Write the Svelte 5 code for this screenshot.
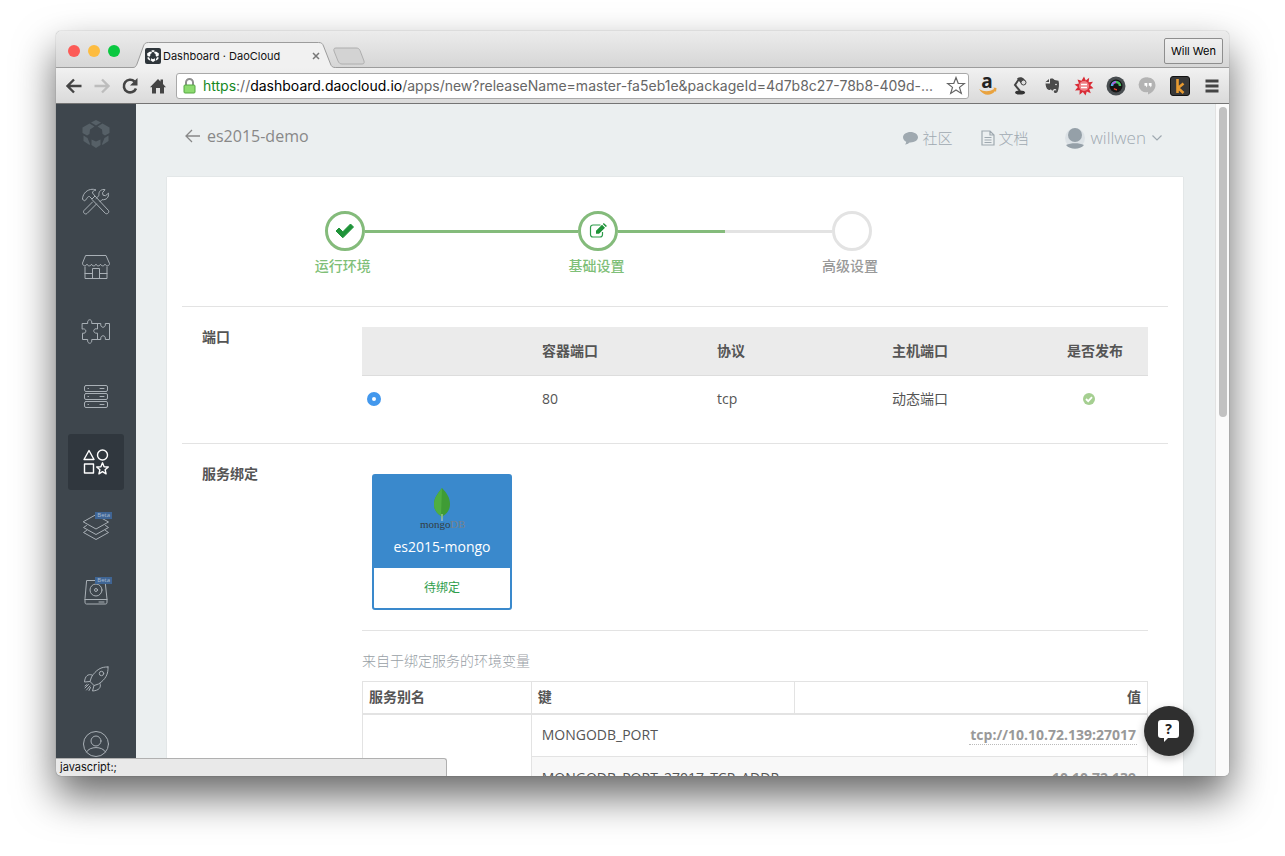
<script>
	const steps = [
		{ title: '运行环境', state: 'done', icon: 'check' },
		{ title: '基础设置', state: 'current', icon: 'edit' },
		{ title: '高级设置', state: 'todo', icon: null }
	];

	const menu = [
		{ id: 'tools', label: '构建' },
		{ id: 'store', label: '镜像仓库' },
		{ id: 'puzzle', label: '服务集成' },
		{ id: 'servers', label: '主机' },
		{ id: 'apps', label: '应用' },
		{ id: 'layers', label: '编排', beta: true },
		{ id: 'disk', label: '存储', beta: true },
		{ id: 'rocket', label: '新手引导', spaced: true },
		{ id: 'user', label: '用户中心' }
	];

	const ports = [{ container: 80, protocol: 'tcp', host: '动态端口' }];

	const envVars = [
		{ key: 'MONGODB_PORT', value: 'tcp://10.10.72.139:27017' },
		{ key: 'MONGODB_PORT_27017_TCP_ADDR', value: '10.10.72.139' }
	];

	const extensions = ['amazon', 'lamp', 'evernote', 'burst', 'lens', 'hangouts', 'kindle'];

	let active = $state('apps');
	let port = $state(80);
</script>

{#snippet cube(size)}
	<svg width={size} height={size} viewBox="0 0 28 28" fill="currentColor" aria-hidden="true">
		<path d="M14 0l5 2.500-5 3-5-3z" />
		<path d="M7.500 3.500l5 3L8 9.500 7.500 14l-2.500 1.500-4.500-2.500V7.500z" />
		<path d="M20.500 3.500l-5 3L20 9.500l.5 4.500 2.500 1.500 4.500-2.500V7.500z" />
		<path d="M1.500 15.500l4 2.500 2.500 6-.5 1L1.500 21z" />
		<path d="M26.500 15.500l-4 2.500-2.500 6 .5 1 6-4z" />
		<path d="M9.500 19.500l4.500 2 4.500-2v5.500L14 28l-4.500-3z" />
	</svg>
{/snippet}

{#snippet menuIcon(id)}
	<svg width="30" height="30" viewBox="0 0 30 30" fill="none" stroke="currentColor" stroke-linejoin="round" stroke-linecap="round" aria-hidden="true">
		{#if id === 'tools'}
			<path d="M1.500 12c0-4 3-8.500 8-9.500 2-.4 4-.2 5.500.5-2.500.5-3.500 1.500-3.500 3l2.500 3-3 3-2.500-2.500c-1.500 0-2 .6-2.500 2L4 13.500z" />
			<path d="M14 9l13.500 14.500c1 2-1 4-3 3L11 12.500" />
			<path d="M11.500 15L3 23.500c-1.500 2 1 4.500 3 3l9.500-9.500M15 11.500l3-3c-.6-3 1-6 5-6l1 .2-2.500 3 .5 2.500 2.500.5 3-2.500c.5 4-2 7-6.500 6.500l-2 2" />
		{:else if id === 'store'}
			<path d="M5 3.500h20l3.500 8c0 3-4 3-4.500.5-.5 2.500-4 2.500-4.500 0-.5 2.500-4 2.500-4.500 0-.5 2.500-4 2.500-4.500 0-.5 2.500-4 2.500-4.500 0-.5 2.500-4.500 2.500-4.500-.5z" />
			<path d="M4 15v11.500h22V15M11.500 26.500v-10h7v10M4 21.500h7.500M18.500 21.500H26" />
		{:else if id === 'puzzle'}
			<path d="M1.500 6.500h5.200c-1-5 5-5 4 0h5.800v5.500c-5-1.500-5 5 0 4.200v6.300h-5.800c1 5-5 5-4 0H1.500v-6.300c4.500 1 4.500-5.500 0-4.200z" />
			<path d="M16.500 6.500h3.300c-1 5 5.500 5 4.500 0h4.200v16h-4.200c1-5-5.500-5-4.500 0h-3.300" />
		{:else if id === 'servers'}
			<rect x="3.500" y="3.500" width="23" height="6" rx="1.500" />
			<rect x="3.500" y="11.500" width="23" height="6" rx="1.500" />
			<rect x="3.500" y="19.500" width="23" height="6" rx="1.500" />
			<path d="M7 6.500h.5M7 14.500h.5M7 22.500h.5M19 6.500h4M19 14.500h4M19 22.500h4" />
		{:else if id === 'apps'}
			<g stroke-width="1.400">
				<path d="M8 3.500l5 9H3z" />
				<circle cx="21.500" cy="8" r="5" />
				<rect x="3.500" y="17" width="9" height="9" />
				<path d="M21.500 15.800l1.600 3.900 4.200.3-3.200 2.700 1 4.100-3.600-2.200-3.600 2.200 1-4.100-3.200-2.700 4.200-.3z" />
			</g>
		{:else if id === 'layers'}
			<path d="M15 3l12.500 7L15 17 2.500 10z" />
			<path d="M5.500 13.500L2.500 15.500 15 22.500l12.500-7-3-2M5.500 18.500l-3 2L15 27.500l12.500-7-3-2" />
		{:else if id === 'disk'}
			<path d="M6 3.500h18l2 18.500v3c0 1.500-.5 2-1.500 2h-19C4.500 27 4 26.500 4 25v-3z" />
			<path d="M4 22.500h22M18 25h5" />
			<circle cx="15" cy="13" r="6" />
			<circle cx="15" cy="13" r="1.500" />
		{:else if id === 'rocket'}
			<path d="M27 3c-7-.5-12 3-16.500 10L9 17.500l4 4 4.500-1.500C24.500 15.500 27.500 10 27 3z" />
			<path d="M11 11c-4-1.500-7 1-7.500 7l5.500-.5M19 19.500c1.500 4-1 7-7.500 7.500l1.500-5.500" />
			<circle cx="20.500" cy="9.500" r="2.200" />
			<path d="M7.500 20.500L4 24M9 22l-3.500 4M6 20.500l-2 1.500M9.500 23.500l-1.500 3" />
		{:else if id === 'user'}
			<circle cx="15" cy="15" r="12.500" />
			<circle cx="15" cy="12" r="5" />
			<path d="M5.500 23c3-6 16-6 19 0" />
		{/if}
	</svg>
{/snippet}

{#snippet extIcon(id)}
	<svg width="20" height="20" viewBox="0 0 20 20" fill="none" aria-hidden="true">
		{#if id === 'amazon'}
			<text class="glyph" x="9" y="12" font-size="19" text-anchor="middle" fill="#222">a</text>
			<path d="M1 13c5 3 10 3 15 0l-.5-1.500 3 .5-.5 4-1-1C13 20.500 5 20 1 13z" fill="#e9a33f" />
		{:else if id === 'lamp'}
			<path d="M9 3l-4 6 5 6" stroke="#444" stroke-width="2" />
			<path d="M7 2.500c4-3 9 0 8.500 5.500l-4.500-.5z" fill="#444" />
			<circle cx="13.500" cy="6.500" r="2.500" fill="#ddd" stroke="#444" />
			<ellipse cx="10" cy="16.500" rx="5" ry="2" fill="#333" />
		{:else if id === 'evernote'}
			<path d="M4 6h3V3L3 6.500zM8 3c2-1 4 0 4.500 1l4 .8c1 3 .5 8-1 11.200-1.500 2-4.500 1-3.500-1.500l2.500-.3c-.5-1.700-3-1.500-3.500.3-1 0-2-.5-2-1.500l-1 1c-2.500 0-4-1.500-4.500-6.500h4.500z" fill="#4b4b4b" />
			<circle cx="14" cy="8.500" r=".8" fill="#eee" />
		{:else if id === 'burst'}
			<path d="M10 .5l1.800 4 3.400-2.700-.6 4.400 4.400-.4-2.700 3.500 3.200 3-4.300.7 1.600 4.200-4-1.600-1.300 4-2.600-3.600-3.400 2.700.2-4.400-4.700.3 2.900-3.500L.5 8.500l4.500-.9-1.500-4 4 1.200z" fill="#d92b35" />
			<circle cx="10" cy="10" r="5" fill="#ef7f85" />
			<path d="M7 8.500h6M7 11.500h6" stroke="#fff" stroke-width="1.500" />
		{:else if id === 'lens'}
			<circle cx="10" cy="10" r="9.500" fill="#484d50" />
			<circle cx="10" cy="10" r="6.500" fill="#151515" />
			<path d="M10 6a4 4 0 0 0-4 4" stroke="#45b8e7" stroke-width="2.500" />
			<path d="M6.500 8.500A4 4 0 0 1 10 6" stroke="#c54bd5" stroke-width="1.500" />
			<path d="M10 6a4 4 0 0 1 4 4" stroke="#48bf61" stroke-width="2.500" />
			<path d="M8 12.500a4 4 0 0 0 3 1.200" stroke="#e8452f" stroke-width="1.500" />
		{:else if id === 'hangouts'}
			<path d="M10 1.500a7.500 7.500 0 0 1 7.500 7.500c0 4.500-3.500 8-7.500 9.500v-2.500A7.500 7.500 0 0 1 10 1.500z" fill="#b3b3b3" />
			<path d="M10 1.500a7.500 7.500 0 1 0 0 14.500z" fill="#b3b3b3" />
			<path d="M6.500 7h2.800v3L8 11.500V9.700H6.500zM10.800 7h2.800v3l-1.300 1.500V9.700h-1.500z" fill="#fff" />
		{:else}
			<rect x=".5" y=".5" width="19" height="19" rx="2.500" fill="#383838" stroke="#111" />
			<path d="M7.500 3v14M13.500 7.500L8 12l5.500 5" stroke="#e79a31" stroke-width="2.600" />
		{/if}
	</svg>
{/snippet}

<div class="desktop">
	<div class="window">
		<header class="titlebar">
			<div class="lights">
				<button class="light close" aria-label="Close"></button>
				<button class="light minimize" aria-label="Minimize"></button>
				<button class="light zoom" aria-label="Zoom"></button>
			</div>
			<div class="tab">
				<svg class="tab-shape" viewBox="0 0 204 26" aria-hidden="true">
					<path d="M0 25.500c2 0 3-1 4-3.500L10.500 4c1-2.500 2-3.500 5-3.500h170c3 0 4 1 5 3.500l7 18c1 2.500 2 3.500 5 3.500V26H0z" fill="#f1f1f1" />
					<path d="M0 25.500c2 0 3-1 4-3.500L10.500 4c1-2.500 2-3.500 5-3.500h170c3 0 4 1 5 3.500l7 18c1 2.500 2 3.500 5 3.500" fill="none" stroke="#9c9c9c" />
				</svg>
				<span class="favicon">{@render cube(12)}</span>
				<span class="tab-title">Dashboard · DaoCloud</span>
				<button class="tab-close" aria-label="Close tab">
					<svg width="8" height="8" viewBox="0 0 8 8" stroke="#777" stroke-width="1.500"><path d="M1 1l6 6M7 1L1 7" /></svg>
				</button>
			</div>
			<button class="new-tab" aria-label="New tab">
				<svg width="32" height="18" viewBox="0 0 32 18"><path d="M3 1h20c2 0 3 .5 4 2.500l4 10.500c.5 2 0 3-2 3H9c-2 0-3-1-4-3L1 4C.5 2 1 1 3 1z" fill="#d3d3d3" stroke="#aeaeae" /></svg>
			</button>
			<button class="profile">Will Wen</button>
		</header>

		<div class="toolbar">
			<button class="tool" aria-label="Back">
				<svg width="18" height="18" viewBox="0 0 18 18" fill="none" stroke="#444" stroke-width="2.400"><path d="M16.500 9H3M9 2.500L2.500 9 9 15.500" /></svg>
			</button>
			<button class="tool" aria-label="Forward" disabled>
				<svg width="18" height="18" viewBox="0 0 18 18" fill="none" stroke="#bdbdbd" stroke-width="2.400"><path d="M1.500 9H15M9 2.500L15.500 9 9 15.500" /></svg>
			</button>
			<button class="tool" aria-label="Reload">
				<svg width="18" height="18" viewBox="0 0 18 18"><path d="M15 11.500A6.300 6.300 0 1 1 13.500 4.500" fill="none" stroke="#444" stroke-width="2.600" /><path d="M16.500 1v7.500H9z" fill="#444" /></svg>
			</button>
			<button class="tool" aria-label="Home">
				<svg width="16" height="18" viewBox="0 0 16 18" fill="#444"><path d="M8 2l2.500 2.500V2.500H13V7l3 3.200h-2V16.500h-4V11H6v5.500H2V10.200H0z" /></svg>
			</button>
			<div class="omnibox">
				<svg width="13" height="16" viewBox="0 0 13 16" aria-hidden="true">
					<path d="M3 7.500V4.500a3.500 3.500 0 0 1 7 0v3" fill="none" stroke="#8f8f8f" stroke-width="2" />
					<rect x="1" y="7" width="11" height="8" rx="1" fill="#8ddb70" stroke="#54a842" />
				</svg>
				<div class="url" role="textbox" tabindex="0" contenteditable="true" aria-label="Address"><span class="secure">https</span>://<span class="host">dashboard.daocloud.io</span>/apps/new?releaseName=master-fa5eb1e&amp;packageId=4d7b8c27-78b8-409d-...</div>
				<button class="star" aria-label="Bookmark">
					<svg width="20" height="20" viewBox="0 0 20 20" fill="#fff" stroke="#666" stroke-width="1.200"><path d="M10 1.500l2.200 5.800 6.200.2-4.900 3.900 1.800 6-5.300-3.500-5.300 3.500 1.800-6L1.600 7.500l6.200-.2z" /></svg>
				</button>
			</div>
			<div class="extensions">
				{#each extensions as id}
					<button class="ext" aria-label={id}>{@render extIcon(id)}</button>
				{/each}
				<button class="ext" aria-label="Menu">
					<svg width="14" height="14" viewBox="0 0 14 14" stroke="#444" stroke-width="3"><path d="M.5 2h13M.5 7h13M.5 12h13" /></svg>
				</button>
			</div>
		</div>

		<div class="viewport">
			<nav class="sidebar">
				<a class="logo" href="#home" aria-label="DaoCloud">{@render cube(28)}</a>
				{#each menu as item}
					<a
						class="item"
						class:active={active === item.id}
						class:spaced={item.spaced}
						href="#{item.id}"
						aria-label={item.label}
						onclick={() => (active = item.id)}
					>
						{@render menuIcon(item.id)}
						{#if item.beta}<span class="beta">Beta</span>{/if}
					</a>
				{/each}
			</nav>

			<main class="content">
				<div class="topbar">
					<a class="back" href="#apps">
						<svg width="15" height="14" viewBox="0 0 15 14" fill="none" stroke="currentColor" stroke-width="1.300"><path d="M15 7H1M7 1L1 7l6 6" /></svg>
						es2015-demo
					</a>
					<div class="links">
						<a href="#community">
							<svg width="15" height="14" viewBox="0 0 15 14" fill="currentColor"><path d="M7.500 1C11.600 1 15 3.300 15 6.200s-3.400 5.200-7.500 5.200h-.9C5.400 12.600 3.800 13.300 2 13.500c.8-.8 1.200-1.700 1.200-2.800C1.200 9.700 0 8 0 6.200 0 3.300 3.400 1 7.500 1z" /></svg>
							社区
						</a>
						<a href="#docs">
							<svg width="14" height="16" viewBox="0 0 14 16" fill="none" stroke="currentColor" stroke-width="1.200"><path d="M1 1h8l4 4v10H1zM9 1v4h4M3.500 7.500h7M3.500 10h7M3.500 12.500h7" /></svg>
							文档
						</a>
						<a class="account" href="#account">
							<svg width="20" height="22" viewBox="0 0 20 22"><circle cx="10" cy="11" r="10" fill="#dce2e6" /><circle cx="10" cy="8" r="7" fill="#95a0a8" /><path d="M1 18c5-2.500 13-2.500 18 0-4 5-14 5-18 0z" fill="#95a0a8" /></svg>
							willwen
							<svg width="10" height="6" viewBox="0 0 10 6" fill="none" stroke="currentColor" stroke-width="1.200"><path d="M.5.5L5 5 9.500.5" /></svg>
						</a>
					</div>
				</div>

				<div class="card">
					<ol class="steps">
						{#each steps as step}
							<li class="step {step.state}">
								<div class="track">
									<span class="line before"></span>
									<span class="circle">
										{#if step.icon === 'check'}
											<svg width="20" height="16" viewBox="0 0 20 16" fill="#1f9339"><path d="M1 8l3-3 3.800 3.800L15.500 1l3 3L7.800 14.800z" stroke="#1f9339" stroke-linejoin="round" /></svg>
										{:else if step.icon === 'edit'}
											<svg width="18" height="16" viewBox="0 0 18 16"><path d="M11.500 2H4a2.500 2.500 0 0 0-2.500 2.500v7A2.500 2.500 0 0 0 4 14h7a2.500 2.500 0 0 0 2.500-2.500V9" fill="none" stroke="#2c9b49" stroke-width="1.200" /><path d="M7 7.800L13 1.800l3 3-6 6H7zM13.800 1l1-1L18 3l-1.200 1z" fill="#1f9339" /></svg>
										{/if}
									</span>
									<span class="line after"></span>
								</div>
								<span class="step-title">{step.title}</span>
							</li>
						{/each}
					</ol>

					<section class="row">
						<h2>端口</h2>
						<table class="ports">
							<thead>
								<tr>
									<th aria-label="选择"></th>
									<th>容器端口</th>
									<th>协议</th>
									<th>主机端口</th>
									<th class="publish">是否发布</th>
								</tr>
							</thead>
							<tbody>
								{#each ports as p}
									<tr>
										<td><input type="radio" name="port" value={p.container} bind:group={port} aria-label="端口 {p.container}" /></td>
										<td>{p.container}</td>
										<td>{p.protocol}</td>
										<td>{p.host}</td>
										<td>
											<svg class="published" width="12" height="12" viewBox="0 0 12 12" role="img" aria-label="已发布"><circle cx="6" cy="6" r="6" fill="#a5cf91" /><path d="M3 6l2.200 2.200L9 4.200" fill="none" stroke="#fff" stroke-width="1.800" /></svg>
										</td>
									</tr>
								{/each}
							</tbody>
						</table>
					</section>

					<section class="row">
						<h2>服务绑定</h2>
						<div class="binding">
							<button class="service">
								<span class="service-head">
									<svg width="48" height="44" viewBox="0 0 48 44" aria-hidden="true">
										<path d="M24 0c5 5 8 10 8 16 0 6-3 9.500-7 12l-1 4-1-4c-4-2.500-7-6-7-12 0-6 4-11 8-16z" fill="#3f9c35" />
										<path d="M24 0c-4 5-8 10-8 16 0 6 3 9.500 7 12z" fill="#4fae41" />
										<path d="M24 26v7" stroke="#c6d6c8" />
										<text class="wordmark" x="2" y="40" fill="#333d42">mongo</text>
										<text class="wordmark" x="32" y="40" fill="#77828a">DB</text>
									</svg>
									es2015-mongo
								</span>
								<span class="service-state">待绑定</span>
							</button>
							<p class="hint">来自于绑定服务的环境变量</p>
							<table class="env">
								<thead>
									<tr>
										<th>服务别名</th>
										<th>键</th>
										<th>值</th>
									</tr>
								</thead>
								<tbody>
									{#each envVars as env, i}
										<tr>
											{#if i === 0}<td class="alias" rowspan={envVars.length}></td>{/if}
											<td>{env.key}</td>
											<td><a href="#{env.key}">{env.value}</a></td>
										</tr>
									{/each}
								</tbody>
							</table>
						</div>
					</section>
				</div>
			</main>

			<div class="scrollbar"><div class="thumb"></div></div>
			<div class="status">javascript:;</div>
			<button class="help" aria-label="帮助">
				<svg width="24" height="24" viewBox="0 0 24 24" aria-hidden="true">
					<path d="M4 1h15a3 3 0 0 1 3 3v12a3 3 0 0 1-3 3h-8l-4 4v-4H4a3 3 0 0 1-3-3V4a3 3 0 0 1 3-3z" fill="#fff" />
					<text class="glyph" x="11.500" y="15" font-size="14" text-anchor="middle" fill="#222">?</text>
				</svg>
			</button>
		</div>
	</div>
</div>

<style>
	:global(body) {
		margin: 0;
		background: #fff;
	}

	* {
		box-sizing: border-box;
	}

	button {
		padding: 0;
		border: 0;
		background: none;
		font: inherit;
		cursor: pointer;
	}

	a {
		color: inherit;
		text-decoration: none;
	}

	svg {
		display: block;
		flex: none;
	}

	.desktop {
		height: 100vh;
		padding: 31px 56px 80px;
	}

	.window {
		display: flex;
		flex-direction: column;
		height: 100%;
		overflow: hidden;
		border-radius: 5px;
		background: #ebeff0;
		box-shadow: 0 0 1px rgba(0, 0, 0, 0.5), 0 20px 40px rgba(0, 0, 0, 0.6);
		font-family: 'Open Sans', 'Noto Sans CJK SC', sans-serif;
		font-size: 14px;
		line-height: 20px;
		color: #555;
	}

	/* browser chrome */

	.titlebar {
		display: flex;
		align-items: flex-end;
		flex: none;
		height: 37px;
		padding: 0 6px 0 12px;
		border-bottom: 1px solid #9c9c9c;
		background: linear-gradient(#ececec, #d6d6d6);
		font-family: Inter, 'Liberation Sans', sans-serif;
		font-size: 11px;
		color: #111;
	}

	.lights {
		display: flex;
		gap: 8px;
		align-self: center;
		padding-top: 3px;
	}

	.light {
		width: 12px;
		height: 12px;
		border-radius: 50%;
	}

	.light.close { background: #fc5b57; }
	.light.minimize { background: #fdbc40; }
	.light.zoom { background: #0ac840; }

	.tab {
		position: relative;
		display: flex;
		align-items: center;
		width: 204px;
		height: 26px;
		margin: 0 -4px -1px 13px;
		padding: 2px 17px 0 12px;
	}

	.tab-shape {
		position: absolute;
		inset: 0;
		width: 100%;
		height: 100%;
	}

	.favicon {
		position: relative;
		display: grid;
		place-items: center;
		width: 16px;
		height: 16px;
		border-radius: 2px;
		background: #2f363b;
		color: #fff;
	}

	.tab-title {
		position: relative;
		flex: 1;
		padding-left: 2px;
		white-space: nowrap;
	}

	.tab-close {
		position: relative;
	}

	.new-tab {
		align-self: center;
		padding-top: 14px;
	}

	.profile {
		align-self: center;
		height: 26px;
		margin: 4px 0 0 auto;
		padding: 0 6px;
		border: 1px solid #8e8e8e;
		border-radius: 2px;
		background: linear-gradient(#f0f0f0, #e0e0e0);
	}

	.toolbar {
		display: flex;
		align-items: center;
		flex: none;
		height: 36px;
		padding: 0 1px 0 4px;
		border-bottom: 1px solid #747474;
		background: linear-gradient(#f1f1f1, #dadada);
	}

	.tool {
		display: grid;
		place-items: center;
		width: 28px;
		height: 28px;
	}

	.omnibox {
		display: flex;
		align-items: center;
		flex: 1;
		min-width: 0;
		height: 26px;
		margin: 0 3px 0 4px;
		padding: 0 2px 0 6px;
		border: 1px solid #a9a9a9;
		border-radius: 3px;
		background: #fff;
	}

	.url {
		flex: 1;
		min-width: 0;
		padding-left: 7px;
		overflow: hidden;
		outline: 0;
		font-family: Inter, Roboto, sans-serif;
		font-size: 14px;
		white-space: nowrap;
		color: #666;
	}

	.secure { color: #16881f; }
	.host { color: #000; }

	.extensions {
		display: flex;
	}

	.ext {
		display: grid;
		place-items: center;
		width: 32px;
		height: 28px;
	}

	.ext svg {
		overflow: visible;
	}

	.glyph {
		font-family: 'Open Sans', sans-serif;
		font-weight: 700;
	}

	/* page */

	.viewport {
		position: relative;
		display: flex;
		flex: 1;
		min-height: 0;
		overflow: hidden;
	}

	.sidebar {
		display: flex;
		flex-direction: column;
		align-items: center;
		gap: 9px;
		flex: none;
		width: 80px;
		padding-top: 2px;
		overflow: hidden;
		background: #3e464d;
		color: #a9b0b6;
	}

	.logo,
	.item {
		position: relative;
		display: grid;
		place-items: center;
		flex: none;
		width: 56px;
		height: 56px;
		border-radius: 3px;
	}

	.logo {
		margin-bottom: 3px;
		color: #566067;
	}

	.item.active {
		background: #30373e;
		color: #fff;
	}

	.item.spaced {
		margin-top: 22px;
	}

	.beta {
		position: absolute;
		top: 13px;
		right: 12px;
		padding: 0 2px;
		background: #3f6594;
		font-size: 6px;
		line-height: 7px;
		color: #a9bcd2;
	}

	.content {
		flex: 1;
		min-width: 0;
		padding: 0 32px 0 31px;
		overflow: hidden;
	}

	.topbar {
		display: flex;
		justify-content: space-between;
		align-items: center;
		height: 73px;
		padding: 0 21px 9px 18px;
		font-size: 16px;
		color: #888;
	}

	.back {
		display: flex;
		align-items: center;
		gap: 7px;
	}

	.links {
		display: flex;
		gap: 28px;
		padding-top: 4px;
		font-weight: 300;
		color: #9fa9b0;
	}

	.links a {
		display: flex;
		align-items: center;
		gap: 4px;
		font-size: 15px;
	}

	.links .account {
		gap: 6px;
		margin-left: 8px;
		font-size: 17px;
	}

	.card {
		padding: 34px 15px 0;
		background: #fff;
		box-shadow: 0 0 1px rgba(0, 0, 0, 0.2);
	}

	.steps {
		display: flex;
		margin: 0;
		padding: 0 0 30px 36px;
		list-style: none;
	}

	.step {
		width: 26.7%;
		text-align: center;
		color: #999;
	}

	.track {
		display: flex;
		align-items: center;
	}

	.line {
		flex: 1;
		height: 3px;
		background: #e3e3e3;
	}

	.circle {
		display: grid;
		place-items: center;
		width: 40px;
		height: 40px;
		border: 3px solid #e3e3e3;
		border-radius: 50%;
	}

	.done .line,
	.current .line {
		background: #84bb7b;
	}

	.done .circle,
	.current .circle {
		border-color: #84bb7b;
	}

	.done .before,
	.todo .after {
		visibility: hidden;
	}

	.step-title {
		display: block;
		padding: 5px 4px 0 0;
		font-weight: 500;
	}

	.done .step-title,
	.current .step-title {
		color: #7fbf78;
	}

	.row {
		display: grid;
		grid-template-columns: 160px 1fr;
		padding: 20px;
		border-top: 1px solid #e3e3e3;
	}

	h2 {
		margin: 0;
		font-size: 14px;
		line-height: 20px;
		font-weight: 600;
	}

	table {
		width: 100%;
		border-collapse: collapse;
		table-layout: fixed;
		text-align: left;
	}

	th {
		font-weight: 600;
	}

	.ports th {
		width: 175px;
		height: 48px;
		padding: 0 5px;
		border-bottom: 1px solid #ddd;
		background: #ebebeb;
	}

	.ports .publish {
		width: auto;
	}

	.ports td {
		height: 48px;
		padding: 0 5px;
	}

	.ports input {
		display: block;
		appearance: none;
		width: 14px;
		height: 14px;
		margin: 0;
		border: 5px solid #4398ed;
		border-radius: 50%;
		background: #fff;
	}

	.published {
		margin-left: 16px;
	}

	.service {
		display: flex;
		flex-direction: column;
		width: 140px;
		height: 136px;
		margin: 10px 10px 20px;
		border: 2px solid #3a89cc;
		border-radius: 3px;
		background: #fff;
		line-height: 20px;
	}

	.service-head {
		display: flex;
		flex-direction: column;
		align-items: center;
		gap: 5px;
		width: 100%;
		height: 92px;
		padding-top: 12px;
		background: #3a89cc;
		color: #fff;
	}

	.wordmark {
		font-family: 'Liberation Serif', serif;
		font-size: 11px;
	}

	.service-state {
		width: 100%;
		font-size: 12px;
		line-height: 40px;
		color: #2e9e4c;
	}

	.hint {
		margin: 0;
		padding: 20px 0 10px;
		border-top: 1px solid #e3e3e3;
		font-weight: 300;
		color: #98a0a6;
	}

	.env {
		border: 1px solid #e3e3e3;
	}

	.env th {
		height: 32px;
		padding: 0 6px;
		border: 1px solid #e3e3e3;
		border-bottom-width: 2px;
	}

	.env th:nth-child(1) { width: 21.5%; }
	.env th:nth-child(2) { width: 33.5%; }

	.env th:last-child,
	.env td:last-child {
		text-align: right;
	}

	.env td {
		height: 43px;
		padding: 0 10px;
		border-bottom: 1px solid #e3e3e3;
	}

	.env .alias {
		border-right: 1px solid #e3e3e3;
		background: #fff;
	}

	.env tbody tr:nth-child(even) {
		background: #f8f8f8;
	}

	.env a {
		padding: 0 1px;
		border-bottom: 1px dotted #bbb;
		font-weight: 700;
		color: #999;
	}

	.scrollbar {
		flex: none;
		width: 14px;
		padding: 3px 2px;
		border-left: 1px solid #e2e2e2;
		background: #fafafa;
	}

	.thumb {
		width: 8px;
		height: 46.5%;
		margin: 0 auto;
		border-radius: 4px;
		background: #c1c1c1;
	}

	.status {
		position: absolute;
		left: 0;
		bottom: 0;
		width: 391px;
		height: 18px;
		padding-left: 4px;
		border: 1px solid #b0b0b0;
		border-width: 1px 1px 0 0;
		border-radius: 0 3px 0 0;
		background: #e9e9e9;
		font-family: Inter, Roboto, sans-serif;
		font-size: 11px;
		line-height: 16px;
		color: #111;
	}

	.help {
		position: absolute;
		right: 35px;
		bottom: 20px;
		display: grid;
		place-items: center;
		width: 50px;
		height: 50px;
		border-radius: 50%;
		background: #2f2f2f;
		box-shadow: 0 3px 8px rgba(0, 0, 0, 0.25);
	}
</style>
